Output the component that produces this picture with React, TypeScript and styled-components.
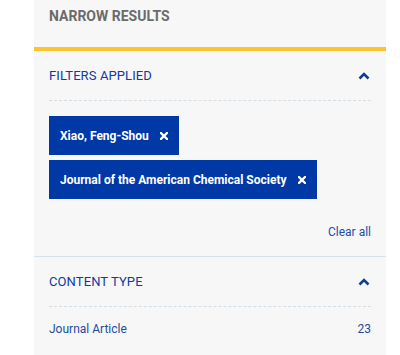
import React from "react";
import styled, { createGlobalStyle } from "styled-components";

const Global = createGlobalStyle`
  html, body { margin: 0; padding: 0; background: #ffffff; }
  body { font-family: Roboto, "Liberation Sans", Arial, sans-serif; }
`;

const Panel = styled.aside`
  margin-left: 34px;
  width: 352px;
  min-height: 355px;
  background: #f7f7f7;
`;

const Title = styled.h2`
  margin: 0;
  box-sizing: border-box;
  height: 51px;
  padding: 8px 15px 0;
  font-size: 14px;
  font-weight: 700;
  line-height: 16px;
  color: #6b6b6b;
  border-bottom: 4px solid #fcc52e;
`;

const Section = styled.section<{ $divider?: boolean }>`
  padding: 0 15px;
  border-bottom: ${(p) => (p.$divider ? "1px solid #d5e1e8" : "none")};
`;

const SectionHead = styled.div`
  display: flex;
  align-items: center;
  justify-content: space-between;
  height: 49px;
  border-bottom: 1px dashed #d3dde6;
`;

const SectionTitle = styled.span`
  font-size: 13px;
  font-weight: 400;
  color: #0e3aa6;
  letter-spacing: 0.1px;
`;

const Chevron = () => (
  <svg width="12" height="8" viewBox="0 0 12 8" style={{ marginRight: 1 }}>
    <polyline points="1.5,6.5 6,2 10.5,6.5" fill="none" stroke="#0b3f8e" strokeWidth="2.6" />
  </svg>
);

const Chips = styled.div`
  display: flex;
  flex-direction: column;
  align-items: flex-start;
  gap: 5px;
  padding-top: 15px;
`;

const Chip = styled.button`
  display: inline-flex;
  align-items: center;
  gap: 11px;
  height: 39px;
  padding: 0 11px 0 11px;
  border: none;
  background: #0039a6;
  color: #ffffff;
  font-family: Roboto, "Liberation Sans", Arial, sans-serif;
  font-size: 12px;
  font-weight: 700;
  cursor: pointer;
`;

const CloseX = () => (
  <svg width="8" height="8" viewBox="0 0 8 8">
    <path d="M1,1 L7,7 M7,1 L1,7" stroke="#ffffff" strokeWidth="2.3" strokeLinecap="square" />
  </svg>
);

const ClearRow = styled.div`
  display: flex;
  justify-content: flex-end;
  padding: 25px 0 16px;
`;

const ClearLink = styled.a`
  font-size: 12px;
  color: #1e4ea6;
  text-decoration: none;
  line-height: 16px;
  cursor: pointer;
`;

const Item = styled.div`
  display: flex;
  justify-content: space-between;
  align-items: center;
  height: 44px;
  font-size: 12px;
  color: #1f4b9e;
`;

export default function App() {
  return (
    <>
      <Global />
      <Panel>
        <Title>NARROW RESULTS</Title>
        <Section $divider>
          <SectionHead>
            <SectionTitle>FILTERS APPLIED</SectionTitle>
            <Chevron />
          </SectionHead>
          <Chips>
            <Chip>
              Xiao, Feng-Shou <CloseX />
            </Chip>
            <Chip>
              Journal of the American Chemical Society <CloseX />
            </Chip>
          </Chips>
          <ClearRow>
            <ClearLink>Clear all</ClearLink>
          </ClearRow>
        </Section>
        <Section>
          <SectionHead>
            <SectionTitle>CONTENT TYPE</SectionTitle>
            <Chevron />
          </SectionHead>
          <Item>
            <span>Journal Article</span>
            <span>23</span>
          </Item>
        </Section>
      </Panel>
    </>
  );
}
